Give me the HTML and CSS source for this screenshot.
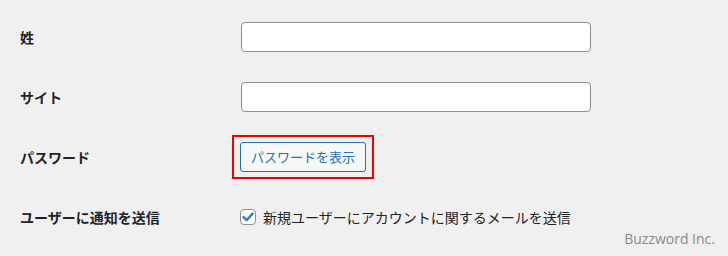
FILE: index.html
```html
<!DOCTYPE html>
<html lang="ja">
<head>
<meta charset="utf-8">
<link rel="stylesheet" href="styles.css">
</head>
<body>
<div class="page">
  <div class="form">
    <div class="row">
      <label class="label">姓</label>
      <div class="field"><input class="text" type="text"></div>
    </div>
    <div class="row">
      <label class="label">サイト</label>
      <div class="field"><input class="text" type="text"></div>
    </div>
    <div class="row">
      <label class="label">パスワード</label>
      <div class="field">
        <span class="highlight"><button class="button" type="button">パスワードを表示</button></span>
      </div>
    </div>
    <div class="row">
      <label class="label">ユーザーに通知を送信</label>
      <div class="field">
        <label class="check">
          <span class="box"><svg viewBox="0 0 16 16" width="16" height="16"><path d="M3.6 8.2 L6.6 11.2 L12.6 4.6" fill="none" stroke="#3582c4" stroke-width="2.6" stroke-linecap="round" stroke-linejoin="round"/></svg></span>
          新規ユーザーにアカウントに関するメールを送信
        </label>
      </div>
    </div>
  </div>
  <div class="credit">Buzzword Inc.</div>
</div>
</body>
</html>
```
FILE: styles.css
```css
html, body {
  margin: 0;
  padding: 0;
  background: #f0f0f1;
}
.page {
  position: relative;
  width: 728px;
  height: 256px;
  overflow: hidden;
  font-family: "Noto Sans CJK JP", "Noto Sans", sans-serif;
  color: #1d2327;
  font-size: 14px;
}
.form {
  padding: 7px 0 0 20px;
}
.row {
  display: grid;
  grid-template-columns: 221px 1fr;
  align-items: center;
  height: 60px;
}
.label {
  font-weight: 700;
  font-size: 14px;
  line-height: 18px;
}
.field {
  display: flex;
  align-items: center;
}
.text {
  box-sizing: border-box;
  width: 350px;
  height: 30px;
  margin: 0;
  background: #fff;
  border: 1px solid #8c8f94;
  border-radius: 4px;
}
.highlight {
  display: inline-block;
  border: 2px solid #ee0000;
  padding: 5px 6px;
  margin: 0 0 0 -9px;
}
.button {
  box-sizing: border-box;
  height: 30px;
  padding: 0 10px;
  margin: 0;
  background: #f6f7f7;
  color: #2271b1;
  border: 1px solid #2271b1;
  border-radius: 3px;
  font-family: "Noto Sans CJK JP", "Noto Sans", sans-serif;
  font-size: 13px;
  line-height: 28px;
  display: block;
}
.check {
  display: flex;
  align-items: center;
  gap: 7px;
  margin-left: -1px;
  font-size: 14px;
  line-height: 18px;
}
.box {
  box-sizing: border-box;
  width: 16px;
  height: 16px;
  border: 1px solid #8c8f94;
  border-radius: 4px;
  background: #fff;
  display: flex;
  align-items: center;
  justify-content: center;
}
.box svg {
  display: block;
  flex: none;
}
.credit {
  position: absolute;
  right: 13px;
  bottom: 8px;
  font-family: "Open Sans", "Noto Sans", sans-serif;
  font-size: 14px;
  color: #8a8a8a;
}
```
